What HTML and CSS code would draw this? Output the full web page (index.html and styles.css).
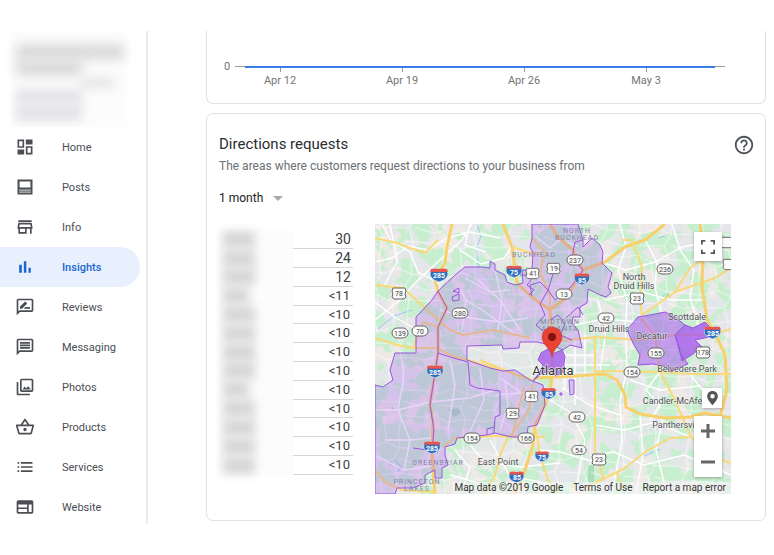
FILE: index.html
```html
<!DOCTYPE html>
<html lang="en">
<head>
<meta charset="utf-8">
<meta name="viewport" content="width=device-width, initial-scale=1">
<title>Insights</title>
<link rel="stylesheet" href="styles.css">
</head>
<body>
<div class="page">
  <aside class="sidebar">
    <div class="business" aria-hidden="true">
      <div class="smudge smudge-name"></div>
      <div class="smudge smudge-name short"></div>
      <div class="smudge smudge-address"></div>
      <div class="smudge smudge-address short"></div>
      <div class="smudge smudge-address short"></div>
    </div>
    <nav class="nav">
      <a class="nav-item" href="#"><svg class="icon" viewBox="0 0 24 24"><path d="M19 5v2h-4V5h4M9 5v6H5V5h4m10 8v6h-4v-6h4M9 17v2H5v-2h4M21 3h-8v6h8V3zM11 3H3v10h8V3zm10 8h-8v10h8V11zm-10 4H3v6h8v-6z"/><path d="M14 4h6v4h-6zM4 16h6v4H4z"/></svg>Home</a>
      <a class="nav-item" href="#"><svg class="icon" viewBox="0 0 24 24"><path fill-rule="evenodd" d="M3 3h18v18H3zM5.500 5.500v7h13v-7z"/><path class="icon-cut" d="M5 15h14v1.500H5zM5 17.500h14V19H5z"/></svg>Posts</a>
      <a class="nav-item" href="#"><svg class="icon" viewBox="0 0 24 24"><path d="M18.360 9l.6 3H5.040l.6-3h12.720M20 4H4v2h16V4zm0 3H4l-1 5v2h1v6h10v-6h4v6h2v-6h1v-2l-1-5zM6 18v-4h6v4H6z"/></svg>Info</a>
      <a class="nav-item active" href="#" aria-current="page"><svg class="icon" viewBox="0 0 24 24"><path d="M5 9.200h3.200V19H5zM10.600 5h3v14h-3zm5.600 8H19v6h-2.800z"/></svg>Insights</a>
      <a class="nav-item" href="#"><svg class="icon" viewBox="0 0 24 24"><path d="M20 2H4c-1.100 0-2 .9-2 2v18l4-4h14c1.100 0 2-.9 2-2V4c0-1.100-.9-2-2-2zm0 14H5.170L4 17.170V4h16v12zM10.500 14H18v-2h-5.500zM14.360 8.130c.2-.2.200-.510 0-.71l-1.770-1.770c-.2-.2-.51-.2-.71 0L6 11.530V14h2.470l5.890-5.870z"/></svg>Reviews</a>
      <a class="nav-item" href="#"><svg class="icon" viewBox="0 0 24 24"><path d="M4 4h16v12H5.170L4 17.170V4m0-2c-1.100 0-1.990.9-1.990 2L2 22l4-4h14c1.100 0 2-.9 2-2V4c0-1.100-.9-2-2-2H4zm2 10h12v2H6v-2zm0-3h12v2H6V9zm0-3h12v2H6V6z"/></svg>Messaging</a>
      <a class="nav-item" href="#"><svg class="icon" viewBox="0 0 24 24"><path d="M20 4v12H8V4h12m0-2H8c-1.100 0-2 .9-2 2v12c0 1.100.9 2 2 2h12c1.100 0 2-.9 2-2V4c0-1.100-.9-2-2-2zM9 15l2.500-3.500 1.800 2L16 11l3 4zM2 6v14c0 1.100.9 2 2 2h14v-2H4V6H2z"/></svg>Photos</a>
      <a class="nav-item" href="#"><svg class="icon" viewBox="0 0 24 24"><path d="M22 9h-4.790l-4.380-6.560c-.19-.28-.51-.42-.83-.42s-.64.140-.83.430L6.790 9H2c-.55 0-1 .45-1 1 0 .09.010.18.040.270l2.540 9.270c.23.840 1 1.460 1.920 1.460h13c.92 0 1.690-.62 1.930-1.460l2.540-9.270L23 10c0-.55-.45-1-1-1zM12 4.800 14.800 9H9.200L12 4.800zM18.500 19l-12.990.010L3.310 11H20.700l-2.200 8zM12 13c-1.100 0-2 .9-2 2s.9 2 2 2 2-.9 2-2-.9-2-2-2z"/></svg>Products</a>
      <a class="nav-item" href="#"><svg class="icon" viewBox="0 0 24 24"><path d="M3 6h2v2H3zm0 5h2v2H3zm0 5h2v2H3zM7 6h14v2H7zm0 5h14v2H7zm0 5h14v2H7z"/></svg>Services</a>
      <a class="nav-item" href="#"><svg class="icon" viewBox="0 0 24 24"><path fill-rule="evenodd" d="M20 4H4c-1.100 0-2 .9-2 2v12c0 1.100.9 2 2 2h16c1.100 0 2-.9 2-2V6c0-1.100-.9-2-2-2zM4 9h10.500v3.500H4zM4 14.500h10.500V18H4zM16.500 9H20v9h-3.500z"/></svg>Website</a>
    </nav>
  </aside>

  <main class="content">
    <section class="card chart-card" aria-label="Activity chart">
      <svg class="chart" viewBox="0 0 558 72">
        <path class="axis" d="M28 35.500H518M73.500 36v5M195.500 36v5M317.500 36v5M439.500 36v5"/>
        <path class="series" d="M38 36H508"/>
        <g class="chart-text">
          <text x="20" y="39" text-anchor="middle">0</text>
          <text x="73" y="53" text-anchor="middle">Apr 12</text>
          <text x="195" y="53" text-anchor="middle">Apr 19</text>
          <text x="317" y="53" text-anchor="middle">Apr 26</text>
          <text x="439" y="53" text-anchor="middle">May 3</text>
        </g>
      </svg>
    </section>

    <section class="card directions">
      <header class="card-head">
        <div>
          <h2 class="title">Directions requests</h2>
          <p class="subtitle">The areas where customers request directions to your business from</p>
        </div>
        <button class="help" type="button" aria-label="Help"><svg viewBox="0 0 24 24"><path d="M11 18h2v-2h-2v2zm1-16C6.480 2 2 6.480 2 12s4.480 10 10 10 10-4.480 10-10S17.520 2 12 2zm0 18c-4.410 0-8-3.590-8-8s3.590-8 8-8 8 3.590 8 8-3.590 8-8 8zm0-14c-2.210 0-4 1.790-4 4h2c0-1.100.9-2 2-2s2 .9 2 2c0 2-3 1.750-3 5h2c0-2.250 3-2.500 3-5 0-2.210-1.790-4-4-4z"/></svg></button>
      </header>
      <div class="period">
        <select class="period-select" aria-label="Period"><option>1 month</option></select>
        <svg class="caret" viewBox="0 0 10 5"><path d="M0 0h10L5 5z"/></svg>
      </div>
      <div class="results">
        <table class="areas">
          <tbody>
            <tr><th><span class="smudge"></span></th><td class="large">30</td></tr>
            <tr><th><span class="smudge"></span></th><td class="large">24</td></tr>
            <tr><th><span class="smudge"></span></th><td class="large">12</td></tr>
            <tr><th><span class="smudge short"></span></th><td>&lt;11</td></tr>
            <tr><th><span class="smudge"></span></th><td>&lt;10</td></tr>
            <tr><th><span class="smudge"></span></th><td>&lt;10</td></tr>
            <tr><th><span class="smudge"></span></th><td>&lt;10</td></tr>
            <tr><th><span class="smudge"></span></th><td>&lt;10</td></tr>
            <tr><th><span class="smudge short"></span></th><td>&lt;10</td></tr>
            <tr><th><span class="smudge"></span></th><td>&lt;10</td></tr>
            <tr><th><span class="smudge"></span></th><td>&lt;10</td></tr>
            <tr><th><span class="smudge"></span></th><td>&lt;10</td></tr>
            <tr><th><span class="smudge"></span></th><td>&lt;10</td></tr>
          </tbody>
        </table>

        <div class="map">
          <svg class="map-art" viewBox="375 224 356 270" role="img" aria-label="Map of Atlanta">
            <defs>
              <filter id="woods" x="0" y="0" width="1" height="1" color-interpolation-filters="sRGB">
                <feTurbulence type="fractalNoise" baseFrequency="0.065 0.06" numOctaves="3" seed="12"/>
                <feColorMatrix values="0 0 0 0 0.78  0 0 0 0 0.935  0 0 0 0 0.81  0 16 0 0 -7.700"/>
              </filter>
              <filter id="blocks" x="0" y="0" width="1" height="1" color-interpolation-filters="sRGB">
                <feTurbulence type="fractalNoise" baseFrequency="0.03" numOctaves="2" seed="4"/>
                <feColorMatrix values="0 0 0 0 0.93  0 0 0 0 0.915  0 0 0 0 0.90  0 0 12 0 -6"/>
              </filter>
              <pattern id="lanes" width="64" height="58" patternUnits="userSpaceOnUse" patternTransform="rotate(4)">
                <path class="lane" d="M0 12L18 14L32 8L46 13L64 12M0 39L14 36L28 42L45 38L64 39M12 0L15 14L10 26L14 36L12 58M44 0L46 13L40 25L45 38L44 58M28 42L31 58M31 0L32 8M15 26L40 25M46 24L64 28M0 28L10 26"/>
              </pattern>
              <symbol id="interstate" viewBox="0 0 18 14"><path d="M1 2Q5 0 9 2Q13 0 17 2L18 6Q18 11 9 14Q0 11 0 6z" fill="#2f6fc0" stroke="#fff" stroke-width=".6"/><path d="M1 1Q5 0 9 1Q13 0 17 1L18 4H0z" fill="#e4564f"/></symbol>
              <symbol id="oval" viewBox="0 0 18 12"><rect x="1" y="1" width="16" height="10" rx="5" class="sign"/></symbol>
              <symbol id="route" viewBox="0 0 16 13"><path d="M2 1H14L15 4L14 7L15 10L13 12H3L1 10L2 7L1 4z" class="sign"/></symbol>
            </defs>
            <rect x="375" y="224" width="356" height="270" fill="#e5e6e9"/>
            <rect x="375" y="224" width="356" height="270" filter="url(#blocks)"/>
            <rect x="375" y="224" width="356" height="270" filter="url(#woods)"/>
            <path fill="#c9eed0" d="M447 290L462 298L458 318L444 322L436 312zM447 358L466 366L470 390L494 396L492 420L460 430L440 424L436 400L442 380zM380 430L400 420L420 436L424 455L400 470L380 458zM480 272L512 288L514 300L500 296zM540 232L552 226L560 244L552 262L540 258zM585 250L596 244L598 262L588 270zM590 274L606 272L604 290L592 286zM482 228L500 236L508 256L496 262L484 250z"/>
            <path fill="#e6e6ea" opacity=".8" d="M560 370L595 372L596 410L580 425L558 408zM467 347L535 345L550 375L532 378L468 360zM470 440L520 440L510 460L475 455z"/>
            <path fill="#a9dcb9" d="M588 465h6v18h-6zM662 296l6-4 3 5-6 2zM449 410l9-2 3 5-7 4z"/>
            <path class="water" d="M477 224L481 236L476 250L479 268M389 465L395 460L402 468L396 472M378 329L394 316L412 310M644 456L660 449M392 407L394 412M658 238L665 236"/>
            <rect x="375" y="224" width="356" height="270" fill="url(#lanes)"/>
            <path class="street" d="M375 262L392 258L408 246L428 250L447 238L470 232L500 238M382 224L391 241L410 252L418 272L440 284M375 320L400 300L417 281L443 257L462 240L472 224M375 302L396 318L416 329M390 224L397 262L384 286M460 250L481 264L504 258L512 247M470 224L465 245L486 252M535 236L550 248L560 240L578 246M620 224L626 247L618 270L627 300L626 322M600 262L626 270L655 262L682 247L703 243M605 300L642 292L671 300L706 300M645 240L657 262L655 287L661 312M672 224L680 250L694 270L690 298L700 330M575 325L603 319L640 322M598 300L606 330L600 372M625 322L627 370L620 400L622 440L612 494M565 355H595M560 365H610M565 352V390M575 340V405M585 335V378M562 388L590 405L620 415M550 400L570 412L585 440L575 494M595 425L625 430L655 422L690 437M640 414L643 455L636 494M663 418L656 450L667 494M595 455L614 452L644 465L684 455L731 475M540 450L560 452L595 462M455 450L470 468L461 494M470 445L486 463L520 467L560 463M490 440L510 476L550 484M450 475L475 482L490 494M690 374L703 391L731 395M660 372L646 390L660 405L650 420M630 380L660 390L700 386"/>
            <path class="street" d="M458 286L466 300L462 330M466 300L485 312L515 334M478 280L500 300L520 330M465 278L490 292L510 290M495 270L502 300L498 330M440 310L470 318L500 322L528 318M400 350L404 375L398 410L410 440L404 470M375 410L398 410L430 402L470 398L495 390M385 440L410 440L432 438M450 360L455 385L448 430M480 368L484 400L470 432M505 380L508 405L500 430M375 455L404 470L432 466M495 395L530 392M500 378L535 402"/>
            <g class="highway">
              <path class="main" d="M452 224L447 247L445 263L435 280L438 292L447 308L438 327L438 353L430 405L433 422L432 455L435 494"/>
              <path d="M375 238L397 243L410 248L425 253L438 240"/>
              <path d="M375 285L403 288L433 315L450 330L463 335L493 330L530 338"/>
              <path d="M375 338L397 345L413 348L437 348L450 355L503 370L535 381"/>
              <path class="main" d="M503 224L512 247L517 283L533 298L550 310L553 350L551 385L545 405L535 425L533 445L525 470L515 494"/>
              <path d="M512 247L527 252L540 253M550 310L550 296L540 272L545 252L532 238"/>
              <path class="main" d="M550 310L567 297L583 270L605 262L625 247L645 240L665 224M583 270L573 250L558 237L550 224"/>
              <path d="M622 240L632 240L642 267L640 300L642 315L675 292L715 278L731 268M675 292L690 268L731 240"/>
              <path class="main" d="M700 224L703 243L702 287L707 320L717 337L725 355L727 390L720 417"/>
              <path d="M553 342L595 337L640 340L675 335L710 335L731 329M640 318L655 335L660 372L675 400L690 435L705 455L731 463"/>
              <path class="main" d="M535 378L575 376L605 374L617 380L625 395L626 407L640 414L665 418L690 417L705 413L731 418"/>
              <path d="M595 337V450L604 480M595 371L660 372L690 374L731 374M585 488L625 468L645 452L670 438L690 437M617 472L622 488"/>
              <path d="M375 470L385 482L402 490L435 492M443 447L455 438L495 436L545 437M508 437L500 455L495 475L485 494M536 430L540 455L548 480L558 494"/>
              <path d="M532 384L529 410L510 437M524 387L512 437M438 327L423 322L413 348M480 360L524 378"/>
            </g>
            <g class="zones">
              <path class="zone" d="M375 385L383 387L393 380L390 370L395 353L416 353V317L432 300L438 291L455 275L465 267H482L490 268L490 261L495 264V270L505 275L507 282L515 285L523 283L522 270L532 270L533 253L530 247L532 238V224H578L583 240V247L592 238L600 245L603 252L602 263L612 273L608 287L611 293L606 297L600 295L588 289L587 303L580 307V317H573L572 323L578 330L582 348L570 345L563 350L554 346L537 342H520L519 348L503 349L502 345L467 346V360L490 368L503 371L515 370L530 380L543 385L545 405L537 425L528 427L527 437H511L495 433L487 435L457 438L455 444L445 447V455L448 465L442 468L442 478H435V470L425 475V483L413 488H397L395 494H375z"/>
              <path class="zone-line" d="M438 291L447 308L438 327V353L430 405L434 430L432 450L438 452M468 362L470 385L477 388L500 391V415L495 417L494 433M487 435L487 429L494 427M438 353L450 357L468 362M553 274L548 290L555 300L570 288L583 270L572 258L575 242L583 240M532 296L530 285L540 282L548 290L540 304L545 315L536 325L548 335M453 291L459 288V293zM452 297L459 294V300L453 301zM520 275L531 275V280L527 285L534 290L529 295M413 448L427 450M550 320L558 315L565 324L560 335L572 340M566 318L578 307L583 315"/>
              <path class="zone deep" d="M627 330L632 324L638 317L650 315L665 312L675 317L685 325L675 335L680 353L688 364L677 368L671 372L664 366L653 364L638 365L640 355L633 343z"/>
              <path class="zone darkest" d="M675 335L685 325L693 328L705 322L713 330L709 337L695 340L702 347L693 354L682 361L678 342z"/>
              <path class="zone darkest" d="M541 353L548 349L552 354L562 350L565 356L563 372L556 376L550 371L541 374L533 381L540 372L543 365L538 360z"/>
              <path class="zone" d="M569 380H574V394L570 395zM560 393h2v2h-2z"/>
            </g>
            <g class="shields">
              <use href="#interstate" x="430" y="268" width="18" height="14"/><use href="#interstate" x="506" y="265" width="16" height="13"/><use href="#interstate" x="574" y="273" width="16" height="12"/><use href="#interstate" x="426" y="365" width="18" height="13"/><use href="#interstate" x="423" y="441" width="18" height="13"/><use href="#interstate" x="704" y="326" width="17" height="13"/><use href="#interstate" x="541" y="387" width="15" height="13"/><use href="#interstate" x="535" y="450" width="14" height="13"/><use href="#interstate" x="509" y="471" width="15" height="12"/>
              <use href="#route" x="391" y="287" width="16" height="13"/><use href="#oval" x="391" y="327" width="18" height="12"/><use href="#oval" x="411" y="325" width="18" height="12"/><use href="#oval" x="451" y="307" width="18" height="12"/><use href="#route" x="525" y="267" width="15" height="13"/><use href="#route" x="546" y="262" width="15" height="13"/><use href="#oval" x="566" y="254" width="18" height="12"/><use href="#oval" x="555" y="288" width="18" height="12"/><use href="#oval" x="656" y="263" width="18" height="12"/><use href="#route" x="629" y="292" width="16" height="13"/><use href="#oval" x="597" y="312" width="18" height="12"/><use href="#oval" x="647" y="347" width="18" height="12"/><use href="#route" x="695" y="346" width="16" height="13"/><use href="#oval" x="623" y="366" width="18" height="12"/><use href="#oval" x="568" y="411" width="18" height="12"/><use href="#oval" x="571" y="444" width="16" height="12"/><use href="#route" x="591" y="453" width="16" height="13"/><use href="#route" x="524" y="390" width="15" height="13"/><use href="#route" x="505" y="407" width="15" height="13"/><use href="#oval" x="463" y="432" width="18" height="12"/><use href="#oval" x="517" y="432" width="18" height="12"/><use href="#route" x="719" y="236" width="15" height="13"/><use href="#route" x="722" y="258" width="15" height="13"/>
            </g>
            <g class="sign-text blue"><text x="439" y="278">285</text><text x="514" y="275">75</text><text x="582" y="283">85</text><text x="435" y="375">285</text><text x="432" y="451">285</text><text x="713" y="336">285</text><text x="549" y="397">85</text><text x="542" y="460">75</text><text x="517" y="480">85</text></g>
            <g class="sign-text"><text x="399" y="296">78</text><text x="400" y="336">139</text><text x="420" y="334">70</text><text x="460" y="316">280</text><text x="533" y="276">41</text><text x="554" y="271">19</text><text x="575" y="263">237</text><text x="564" y="297">13</text><text x="665" y="272">236</text><text x="637" y="301">23</text><text x="606" y="321">42</text><text x="656" y="356">155</text><text x="703" y="355">178</text><text x="632" y="375">154</text><text x="577" y="420">42</text><text x="579" y="453">54</text><text x="599" y="462">23</text><text x="532" y="399">41</text><text x="513" y="416">29</text><text x="472" y="441">154</text><text x="526" y="441">166</text></g>
            <g class="district"><text x="534" y="257">BUCKHEAD</text><text x="577" y="233">NORTH</text><text x="577" y="240">BUCKHEAD</text><text x="560" y="324">MIDTOWN</text><text x="560" y="331">ATLANTA</text><text x="438" y="465">GREENBRIAR</text><text x="417" y="484">PRINCETON</text><text x="417" y="491">LAKES</text></g>
            <g class="place"><text x="634" y="280">North</text><text x="634" y="289">Druid Hills</text><text x="609" y="332">Druid Hills</text><text x="687" y="320">Scottdale</text><text x="652" y="339">Decatur</text><text x="687" y="372">Belvedere Park</text><text x="675" y="404">Candler-McAfee</text><text x="678" y="428">Panthersville</text><text x="498" y="465">East Point</text></g>
            <text class="city" x="553" y="375">Atlanta</text>
            <path fill="#ea4335" stroke="#b92b20" stroke-width=".5" d="M552 357C551 348 542 345 542 337A10 10 0 0 1 562 337C562 345 553 348 552 357z"/><circle cx="552" cy="337" r="4" fill="#811411"/>
          </svg>
          <div class="controls">
            <button class="control" type="button" aria-label="Toggle fullscreen"><svg viewBox="0 0 16 16"><path d="M1 5V1H5M11 1H15V5M15 11V15H11M5 15H1V11"/></svg></button>
            <div class="controls-low">
              <button class="control pin" type="button" aria-label="Show business"><svg viewBox="0 0 14 18"><path fill-rule="evenodd" d="M7 1C3.500 1 1 3.500 1 7C1 11 7 17 7 17S13 11 13 7C13 3.500 10.500 1 7 1zM7 4.500A2.500 2.500 0 1 1 7 9.500A2.500 2.500 0 0 1 7 4.500z"/></svg></button>
              <div class="zoom">
                <button type="button" aria-label="Zoom in"><svg viewBox="0 0 14 14"><path d="M0 7H14M7 0V14"/></svg></button>
                <button type="button" aria-label="Zoom out"><svg viewBox="0 0 14 14"><path d="M0 7H14"/></svg></button>
              </div>
            </div>
          </div>
          <div class="credits"><span>Map data ©2019 Google</span><a href="#">Terms of Use</a><a href="#">Report a map error</a></div>
        </div>
      </div>
    </section>
  </main>
</div>
</body>
</html>
```
FILE: styles.css
```css
* { box-sizing: border-box; }

body {
  margin: 0;
  background: #fff;
  color: #3c4043;
  font-family: Roboto, "Liberation Sans", sans-serif;
}

button { border: 0; padding: 0; background: none; cursor: pointer; }
a { color: inherit; text-decoration: none; }
.page { display: flex; align-items: flex-start; padding-top: 31px; }

/* Sidebar */
.sidebar { flex: none; width: 148px; border-right: 2px solid #e8eaed; }
.business { height: 96px; padding: 14px 22px 0 16px; overflow: hidden; background: linear-gradient(90deg, #fff 10px, #fcfcfc 14px, #fcfcfc 124px, #fff 130px); }
.smudge { display: block; background: #d6d6d6; filter: blur(5px); }
.smudge-name { height: 14px; margin-bottom: 2px; filter: blur(6px); }
.smudge-name.short { width: 66px; }
.smudge-address { height: 12px; margin-bottom: 0; margin-left: 64px; margin-right: 10px; background: #e8e8ea; }
.smudge-address.short { width: 66px; margin: 0; height: 16px; background: #e4e4e8; }
.nav { margin-bottom: -3px; }
.nav-item {
  display: flex;
  align-items: center;
  gap: 27px;
  height: 40px;
  margin-right: 6px;
  padding-left: 15px;
  border-radius: 0 20px 20px 0;
  color: #4b4e53;
  font-size: 11px;
}
.nav-item.active { background: #e8f0fe; color: #1967d2; font-weight: 500; }
.icon { width: 20px; height: 20px; fill: currentColor; }
.icon-cut { fill: #c4c4c8; }

/* Cards */
.content { flex: 1; min-width: 0; padding: 0 8px 0 58px; }
.card { border: 1px solid #dfe0e3; border-radius: 7px; }
.chart-card { margin-bottom: 9px; border-top: 0; border-radius: 0 0 7px 7px; }
.chart { display: block; width: 100%; }
.axis { stroke: #9a9a9a; fill: none; }
.series { stroke: #3b7de8; stroke-width: 2; }
.chart-text { fill: #757575; font-size: 11px; }

.directions { padding: 20px 10px 26px 12px; }
.card-head { display: flex; justify-content: space-between; align-items: flex-start; }
.title { margin: 0; color: #2b2d30; font-size: 15px; font-weight: 400; line-height: 20px; }
.subtitle { margin: 4px 0 0; color: #6b6f75; font-size: 12px; line-height: 16px; }
.help { width: 22px; height: 22px; }
.help svg { display: block; width: 22px; height: 22px; fill: #4e5257; }
.period { display: flex; align-items: center; gap: 9px; height: 16px; margin-top: 16px; }
.period-select { appearance: none; border: 0; padding: 0; background: none; color: #202124; font: 12px/16px Roboto, sans-serif; }
.caret { width: 10px; height: 5px; fill: #aaa; }

.results { display: flex; align-items: flex-start; gap: 22px; margin-top: 18px; }
.areas { flex: none; width: 134px; height: 245px; margin-top: 6px; border-collapse: collapse; table-layout: fixed; }
.areas th { width: 74px; padding: 0; background: #fcfcfc; }
.areas th .smudge { width: 32px; height: 17px; margin-left: 4px; }
.areas th .smudge.short { width: 26px; }
.areas td { padding: 0 3px 0 0; border-bottom: 1px solid #d5d6db; color: #3c4043; font-size: 13px; line-height: 16px; text-align: right; }
.areas td.large { padding-right: 2px; font-size: 14px; }

/* Map */
.map { position: relative; flex: 1; min-width: 0; margin-right: 24px; overflow: hidden; }
.map-art { display: block; width: 100%; font-family: Roboto, sans-serif; }
.lane { fill: none; stroke: #fff; stroke-width: 1; opacity: .6; }
.street { fill: none; stroke: #fff; stroke-width: 1.4; stroke-linejoin: round; }
.water { fill: none; stroke: #9cc8f5; stroke-width: 1; }
.highway { fill: none; stroke: #f9d978; stroke-width: 2; stroke-linejoin: round; }
.highway .main { stroke: #f8d06a; stroke-width: 3; }
.zone { fill: #a050ee; fill-opacity: .24; stroke: #9a55e0; stroke-width: 1; stroke-linejoin: round; }
.zone.deep { fill-opacity: .5; }
.zone.darkest { fill-opacity: .75; }
.zone-line { fill: none; stroke: #9a55e0; }
.sign { fill: #fafafa; stroke: #666; stroke-width: 1; }
.sign-text { fill: #444; font-size: 7px; text-anchor: middle; }
.sign-text.blue { fill: #fff; font-weight: 700; }
.district { fill: #8482ab; font-size: 7px; letter-spacing: 1px; text-anchor: middle; }
.place { fill: #4d5055; stroke: #fff; stroke-width: 1; paint-order: stroke; stroke-opacity: .6; font-size: 9px; text-anchor: middle; }
.city { fill: #333; stroke: #fff; stroke-width: 1; paint-order: stroke; font-size: 13px; text-anchor: middle; }
.controls { position: absolute; inset: 8px 9px 17px auto; display: flex; flex-direction: column; justify-content: space-between; align-items: flex-end; }
.controls-low { display: flex; flex-direction: column; align-items: flex-end; gap: 8px; }
.control, .zoom { display: flex; justify-content: center; align-items: center; width: 28px; height: 29px; background: #fff; box-shadow: 0 1px 3px rgba(0, 0, 0, .3); }
.control svg { width: 14px; height: 14px; fill: none; stroke: #555; stroke-width: 2; }
.control.pin { width: 20px; height: 20px; }
.control.pin svg { width: 13px; height: 16px; fill: #555; stroke: none; }
.zoom { flex-direction: column; height: 61px; }
.zoom button { flex: 1; display: flex; align-items: center; }
.zoom svg { width: 14px; height: 14px; stroke: #666; stroke-width: 3; }
.credits { position: absolute; right: 0; bottom: 0; display: flex; gap: 10px; padding: 0 5px 0 2px; background: rgba(245, 245, 245, .6); color: #333; font-size: 10px; line-height: 12px; white-space: nowrap; }
```
